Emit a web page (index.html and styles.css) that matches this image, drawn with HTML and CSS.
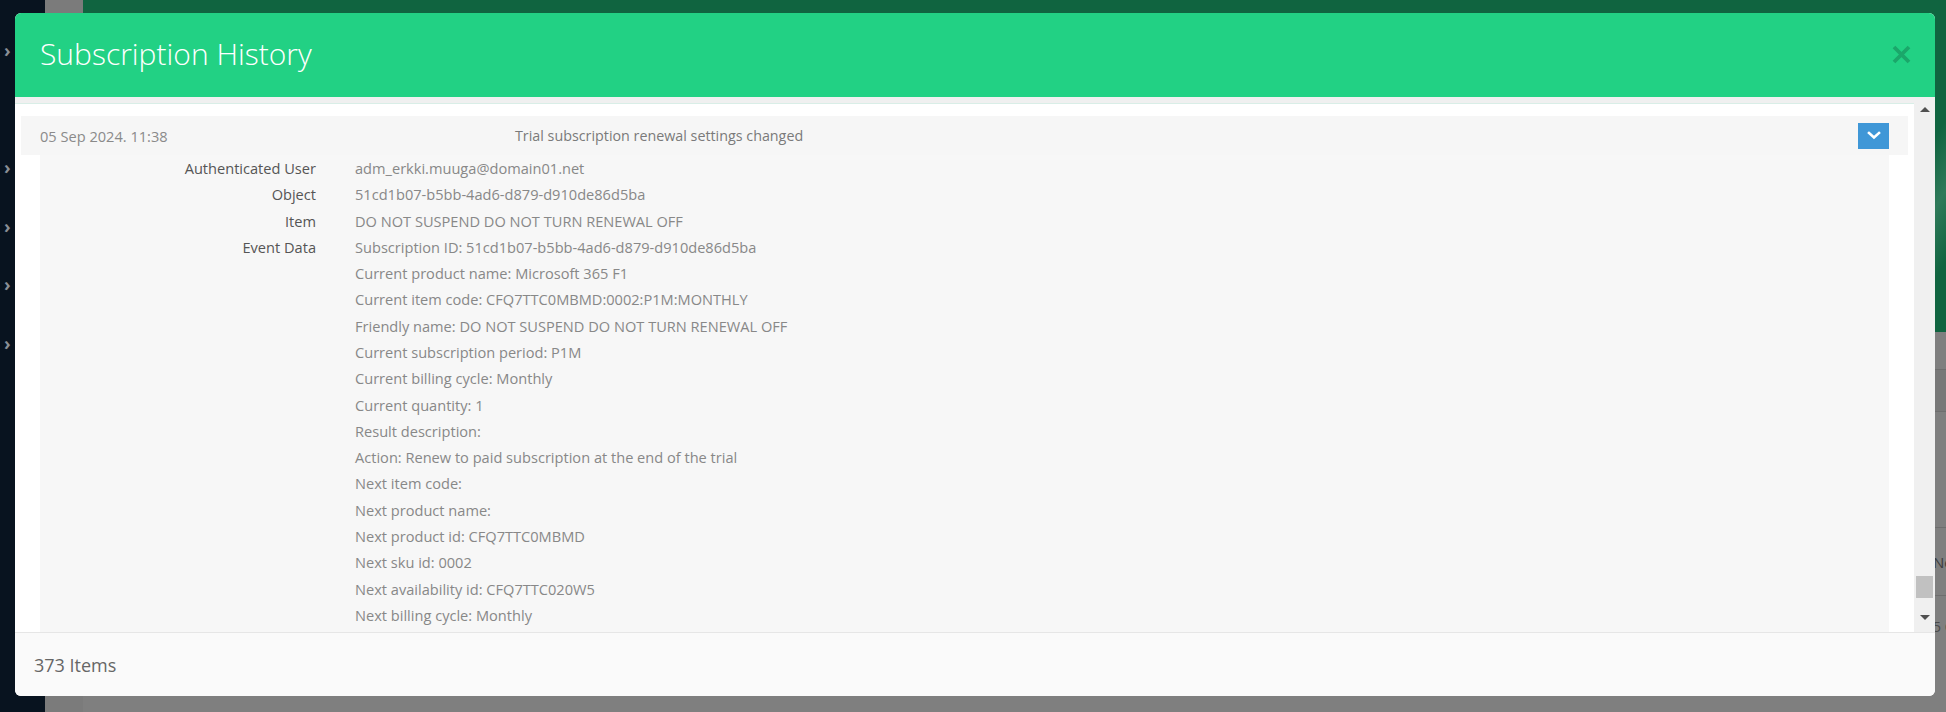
FILE: index.html
```html
<!DOCTYPE html>
<html lang="en">
<head>
<meta charset="utf-8">
<title>Subscription History</title>
<link rel="stylesheet" href="styles.css">
</head>
<body>
<div class="page">
  <aside class="sidebar">
    <div class="nav-item"><span class="chev">›</span></div>
    <div class="nav-item"></div>
    <div class="nav-item"><span class="chev">›</span></div>
    <div class="nav-item"><span class="chev">›</span></div>
    <div class="nav-item"><span class="chev">›</span></div>
    <div class="nav-item"><span class="chev">›</span></div>
  </aside>
  <div class="strip"></div>
  <main class="behind">
    <div class="behind-hero"></div>
    <div class="behind-row r1"></div>
    <div class="behind-row r2"></div>
    <div class="behind-row r3"></div>
    <div class="behind-row r4"><span class="behind-text">Ne</span></div>
    <div class="behind-row r5"><span class="behind-text small">5 C</span></div>
  </main>

  <div class="modal">
    <header class="modal-header">
      <h1 class="modal-title">Subscription History</h1>
      <button class="close-btn" aria-label="Close">
        <svg width="19" height="19" viewBox="0 0 19 19"><path d="M2 2 L17 17 M17 2 L2 17" stroke="#1ba76a" stroke-width="3.8" fill="none"/></svg>
      </button>
    </header>
    <div class="modal-body">
      <div class="scroll-area">
        <div class="top-marker-row"><span class="top-marker"></span></div>
        <div class="event">
          <div class="event-head">
            <span class="event-date">05 Sep 2024. 11:38</span>
            <span class="event-title">Trial subscription renewal settings changed</span>
            <button class="toggle-btn" aria-label="Collapse">
              <svg width="14" height="9" viewBox="0 0 14 9"><path d="M2 2 L7 6.5 L12 2" stroke="#fff" stroke-width="2.6" fill="none" stroke-linecap="square"/></svg>
            </button>
          </div>
          <div class="event-detail">
            <div class="kv">
              <div class="k">Authenticated User</div>
              <div class="v">adm_erkki.muuga@domain01.net</div>
            </div>
            <div class="kv">
              <div class="k">Object</div>
              <div class="v">51cd1b07-b5bb-4ad6-d879-d910de86d5ba</div>
            </div>
            <div class="kv">
              <div class="k">Item</div>
              <div class="v">DO NOT SUSPEND DO NOT TURN RENEWAL OFF</div>
            </div>
            <div class="kv">
              <div class="k">Event Data</div>
              <div class="v">
                <div>Subscription ID: 51cd1b07-b5bb-4ad6-d879-d910de86d5ba</div>
                <div>Current product name: Microsoft 365 F1</div>
                <div>Current item code: CFQ7TTC0MBMD:0002:P1M:MONTHLY</div>
                <div>Friendly name: DO NOT SUSPEND DO NOT TURN RENEWAL OFF</div>
                <div>Current subscription period: P1M</div>
                <div>Current billing cycle: Monthly</div>
                <div>Current quantity: 1</div>
                <div>Result description:</div>
                <div>Action: Renew to paid subscription at the end of the trial</div>
                <div>Next item code:</div>
                <div>Next product name:</div>
                <div>Next product id: CFQ7TTC0MBMD</div>
                <div>Next sku id: 0002</div>
                <div>Next availability id: CFQ7TTC020W5</div>
                <div>Next billing cycle: Monthly</div>
              </div>
            </div>
          </div>
        </div>
      </div>
      <div class="scrollbar">
        <span class="arrow-up"></span>
        <span class="track"><span class="thumb"></span></span>
        <span class="arrow-down"></span>
      </div>
    </div>
    <footer class="modal-footer">373 Items</footer>
  </div>
</div>
</body>
</html>
```
FILE: styles.css
```css
* { box-sizing: border-box; }
html, body { margin: 0; padding: 0; }
body {
  width: 1946px;
  height: 712px;
  overflow: hidden;
  font-family: "Open Sans", "Noto Sans", sans-serif;
  background: #7f7f7f;
}
.page {
  position: relative;
  display: flex;
  width: 1946px;
  height: 712px;
}
.sidebar {
  width: 45px;
  background: #08131f;
  padding-top: 21px;
  display: flex;
  flex-direction: column;
}
.nav-item {
  height: 58.5px;
  display: flex;
  align-items: center;
  padding-left: 4px;
}
.chev {
  color: #8a8f96;
  font-size: 18px;
  font-weight: 700;
  line-height: 1;
}
.strip {
  width: 38px;
  background: #7b7b7b;
}
.behind {
  flex: 1;
  display: flex;
  flex-direction: column;
  background: #7f7f7f;
}
.behind-hero {
  height: 332px;
  background: linear-gradient(120deg, #106440 0%, #106440 94%, #2f7a5a 96%, #106440 98%);
}
.behind-row {
  border-bottom: 1px solid #6e6e6e;
  display: flex;
  align-items: center;
  justify-content: flex-end;
}
.r1 { height: 38px; }
.r2 { height: 42px; background: #787878; }
.r3 { height: 116px; }
.r4 { height: 68px; }
.r5 { height: 60px; border-bottom: none; }
.behind-text {
  color: #3c3c3c;
  font-size: 15px;
  width: 13px;
  white-space: nowrap;
}
.behind-text.small { font-size: 14px; color: #4a4a4a; }

/* modal */
.modal {
  position: absolute;
  left: 15px;
  top: 13px;
  width: 1920px;
  height: 683px;
  background: #fff;
  border-radius: 6px;
  overflow: hidden;
  display: flex;
  flex-direction: column;
}
.modal-header {
  height: 84px;
  flex: none;
  background: #22d184;
  display: flex;
  align-items: center;
  justify-content: space-between;
  padding: 0 24px 0 25px;
}
.modal-title {
  margin: 0;
  color: #fff;
  font-weight: 300;
  font-size: 30px;
  line-height: 1;
  padding-bottom: 2px;
}
.close-btn {
  border: 0;
  background: none;
  padding: 0;
  width: 19px;
  height: 19px;
  display: flex;
  margin-bottom: 2px;
}
.modal-body {
  flex: 1;
  display: flex;
  background: #f0f0f0;
  min-height: 0;
}
.scroll-area {
  flex: 1;
  margin-top: 6px;
  background: #fff;
  border-top: 1px solid #d9eee7;
  overflow: hidden;
  padding: 0 6px;
}
.top-marker-row {
  height: 12px;
  display: flex;
  justify-content: flex-end;
  padding-right: 19px;
}
.top-marker {
  width: 31px;
  height: 1px;
  background: #0c1a2e;
  margin-top: -1px;
}
.event-head {
  height: 39px;
  background: #f6f6f6;
  display: flex;
  align-items: center;
  padding: 0 19px;
  color: #8a8a8a;
  font-size: 14.6px;
}
.event-date {
  width: 475px;
  flex: none;
}
.event-title {
  flex: 1;
  color: #7a7a7a;
  font-size: 14.3px;
}
.toggle-btn {
  width: 31px;
  height: 26px;
  border: 0;
  padding: 0;
  background: #3f97d7;
  display: flex;
  align-items: center;
  justify-content: center;
}
.event-detail {
  margin: 0 19px;
  background: #f7f7f7;
  font-size: 14.6px;
  line-height: 26.28px;
  padding-bottom: 20px;
}
.kv {
  display: flex;
}
.k {
  width: 276px;
  flex: none;
  text-align: right;
  color: #555;
}
.v {
  padding-left: 39px;
  color: #888;
}
.scrollbar {
  width: 21px;
  flex: none;
  display: flex;
  flex-direction: column;
  align-items: center;
  padding: 10px 0 10px;
}
.arrow-up {
  width: 0; height: 0;
  border-left: 5px solid transparent;
  border-right: 5px solid transparent;
  border-bottom: 5px solid #505050;
}
.track {
  flex: 1;
  width: 100%;
  display: flex;
  flex-direction: column;
  justify-content: flex-end;
  padding: 0 2px 17px;
}
.thumb {
  height: 22px;
  background: #c1c1c1;
}
.arrow-down {
  width: 0; height: 0;
  border-left: 5px solid transparent;
  border-right: 5px solid transparent;
  border-top: 5px solid #505050;
  margin-bottom: 2px;
}
.modal-footer {
  height: 64px;
  flex: none;
  border-top: 1px solid #e6e6e6;
  background: #fafafa;
  display: flex;
  align-items: center;
  padding-left: 19px;
  color: #666;
  font-size: 18px;
}
```
